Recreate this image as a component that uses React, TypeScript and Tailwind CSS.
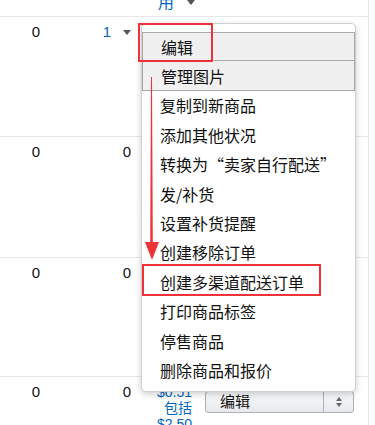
import React from 'react';

const menuItems = [
  '编辑',
  '管理图片',
  '复制到新商品',
  '添加其他状况',
  '转换为“卖家自行配送”',
  '发/补货',
  '设置补货提醒',
  '创建移除订单',
  '创建多渠道配送订单',
  '打印商品标签',
  '停售商品',
  '删除商品和报价',
];

const font = { fontFamily: '"Liberation Sans", "Noto Sans CJK SC", sans-serif' };

function Caret() {
  return <span className="block w-0 h-0 border-l-[4px] border-r-[4px] border-t-[5px] border-l-transparent border-r-transparent border-t-[#555]" />;
}

function ActionSelect() {
  return (
    <div className="ml-[5px] w-[149px] h-[22px] flex rounded-[3px] border border-[#adb1b8] bg-gradient-to-b from-[#f7f8fa] to-[#e7e9ec] text-[15px] text-[#111]">
      <div className="flex-1 pl-[14px] leading-[20px]">编辑</div>
      <div className="w-[30px] border-l border-[#adb1b8] flex flex-col items-center justify-center gap-[2px]">
        <span className="w-0 h-0 border-l-[3px] border-r-[3px] border-b-[4px] border-l-transparent border-r-transparent border-b-[#666]" />
        <span className="w-0 h-0 border-l-[3px] border-r-[3px] border-t-[4px] border-l-transparent border-r-transparent border-t-[#666]" />
      </div>
    </div>
  );
}

function Row({ second, link, h, price }: { second: string; link?: boolean; h: number; price?: boolean }) {
  return (
    <div className="grid grid-cols-[50px_90px_60px_168px] border-b border-[#e7e7e7]" style={{ height: h }}>
      <div className="text-right pr-[10px] pt-[5px] text-[15px] leading-[20px] text-[#111]">0</div>
      <div className="pt-[5px] text-[15px] leading-[20px] flex justify-end items-start pr-[9px] gap-[12px]">
        {link ? (
          <>
            <span className="text-[#0066c0]">{second}</span>
            <span className="mt-[8px]"><Caret /></span>
          </>
        ) : (
          <span className="text-[#111]">{second}</span>
        )}
      </div>
      <div className="pt-[7px] pr-[8px] text-right text-[14px] leading-[16px] text-[#0066c0]">
        {price && (
          <>
            <div>$0.51</div>
            <div>包括</div>
            <div>$2.50</div>
          </>
        )}
      </div>
      <div className="pt-[14px]">
        <ActionSelect />
      </div>
    </div>
  );
}

export default function App() {
  return (
    <div className="relative w-[375px] h-[425px] overflow-hidden bg-white" style={font}>
      <div className="w-[369px] border-r border-[#e7e7e7] h-[425px]">
        {/* header tail */}
        <div className="h-[17px] border-b border-[#e7e7e7] overflow-hidden grid grid-cols-[50px_90px_60px_168px]">
          <div />
          <div />
          <div className="flex items-start gap-[13px] -mt-[7px] pl-[18px] col-span-2">
            <span className="text-[16px] leading-[20px] text-[#0066c0]">用</span>
            <span className="mt-[7px]"><Caret /></span>
          </div>
        </div>
        <Row second="1" link h={120} />
        <Row second="0" h={121} />
        <Row second="0" h={119} />
        <Row second="0" h={60} price />
      </div>

      {/* open dropdown */}
      <div className="absolute left-[141px] top-[23px] w-[215px] h-[369px] bg-white border border-[#d0d0d0] rounded-[5px] shadow-[0_2px_6px_rgba(0,0,0,0.2)] pt-[8px]" style={{ fontFamily: '"Noto Sans CJK SC", sans-serif' }}>
        {menuItems.map((item, i) => (
          <div
            key={item}
            className={
              i < 2
                ? `h-[29.4px] pl-[18px] flex items-center text-[16px] text-[#111] bg-[#f0f0f0] border-x border-[#a8a8a8] ${i === 0 ? 'border-y' : 'border-b'}`
                : 'h-[29.4px] pl-[18px] flex items-center text-[16px] text-[#111]'
            }
          >
            {item}
          </div>
        ))}
      </div>

      {/* annotations */}
      <div className="absolute left-[138px] top-[23px] w-[75px] h-[39px] border-2 border-[#ee3338]" />
      <div className="absolute left-[142px] top-[264px] w-[179px] h-[32px] border-2 border-[#ee3338]" />
      <svg className="absolute left-[140px] top-[70px]" width="30" height="195" viewBox="0 0 30 195">
        <path d="M11 7 L12 7 L12.8 175 L10.2 175 Z" fill="#ee3338" />
        <path d="M5 172 L19 172 L12 190 Z" fill="#ee3338" />
      </svg>
    </div>
  );
}
